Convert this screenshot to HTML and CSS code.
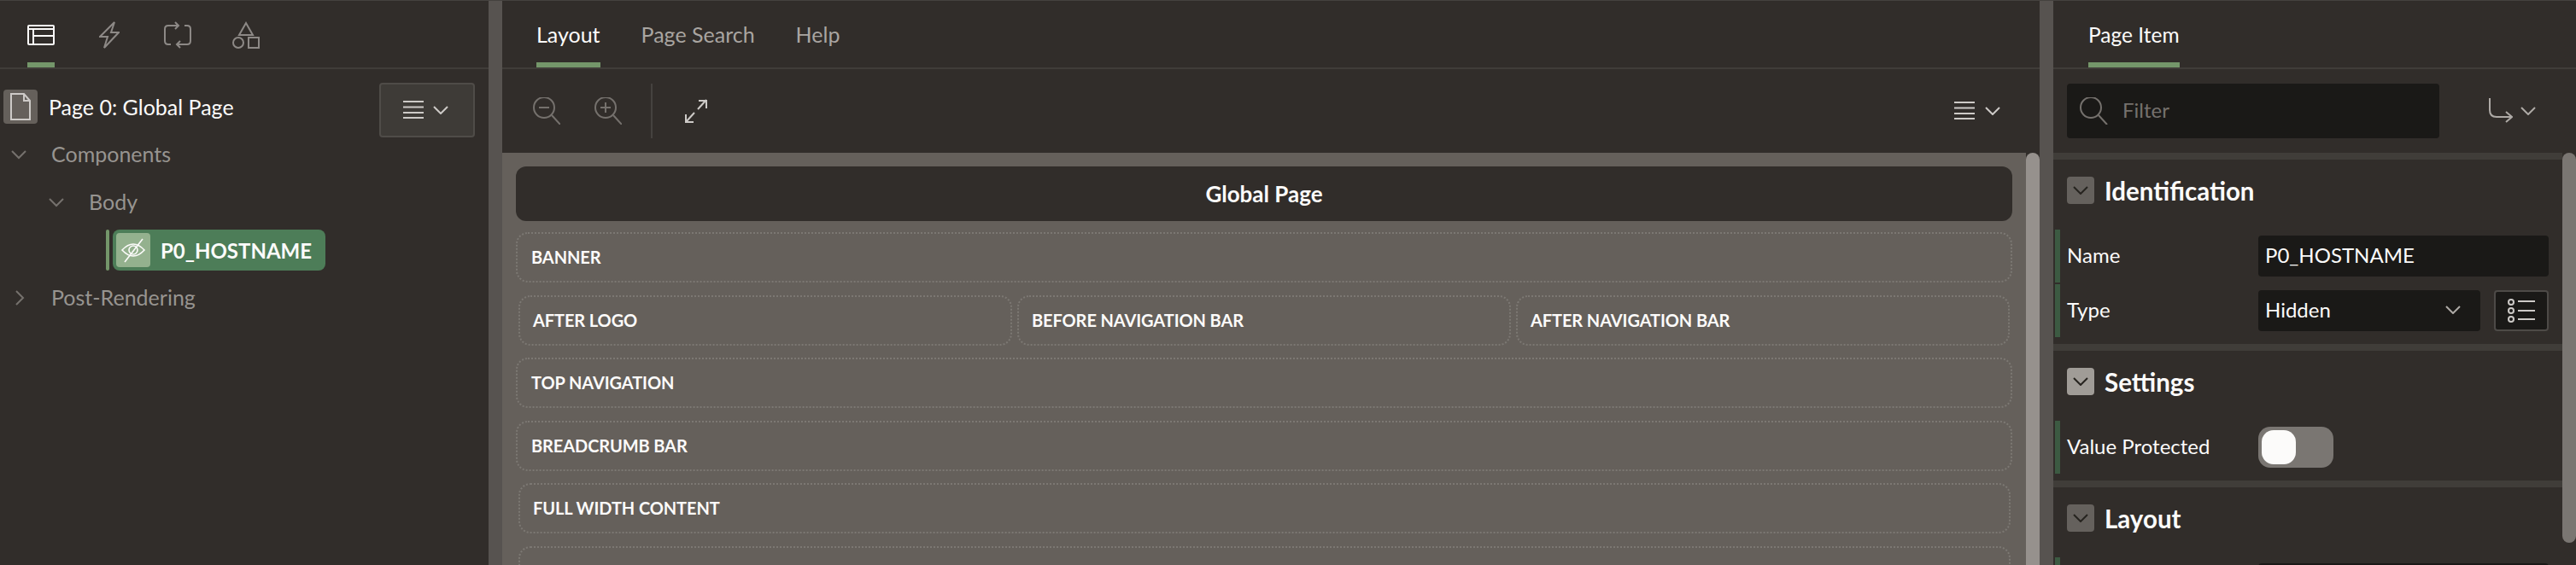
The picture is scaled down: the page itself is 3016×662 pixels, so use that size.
FILE: index.html
```html
<!DOCTYPE html>
<html lang="en">
<head>
  <meta charset="UTF-8">
  <title>Page Designer</title>
  <link rel="stylesheet" href="styles.css">
</head>
<body>

  <div class="designer">

    <!-- left panel: page tree -->
    <div class="panel panel-left">
      <div class="tabs tabs-icons">
        <div class="icon-tab active">
          <svg width="32" height="32" viewBox="0 0 32 32" class="ico ico-white"><rect x="1" y="5" width="30" height="22" rx="1"/><path d="M1 9h30M7 9v18M7 17h24"/></svg>
        </div>
        <div class="icon-tab">
          <svg width="24" height="32" viewBox="0 0 24 32" class="ico"><path d="M18 1 1 18h9L6 31l17-18h-9z"/></svg>
        </div>
        <div class="icon-tab">
          <svg width="32" height="32" viewBox="0 0 32 32" class="ico"><path d="M17 5H5Q1 5 1 9v14q0 4 4 4h3M13 1l4 4-4 4M15 27h12q4 0 4-4V9q0-4-4-4h-3M19 23l-4 4 4 4"/></svg>
        </div>
        <div class="icon-tab">
          <svg width="32" height="32" viewBox="0 0 32 32" class="ico"><path d="M16 2l8 14H8z"/><circle cx="7" cy="25" r="6"/><rect x="19" y="19" width="12" height="12"/></svg>
        </div>
      </div>

      <div class="tree">
        <div class="tree-head">
          <div class="tree-root">
            <span class="page-badge">
              <svg width="26" height="32" viewBox="0 0 26 32" class="ico ico-light"><path d="M2 1h15l7 8v22H2zM17 1v8h7"/></svg>
            </span>
            <span class="tree-root-label">Page 0: Global Page</span>
          </div>
          <div class="menu-btn">
            <svg width="24" height="22" viewBox="0 0 24 22" class="ico ico-light"><path d="M0 1h24M0 7.500h24M0 14h24M0 20h24"/></svg>
            <svg width="18" height="10" viewBox="0 0 18 10" class="ico ico-light"><path d="M1 1l8 8 8-8"/></svg>
          </div>
        </div>

        <div class="tree-row">
          <svg width="18" height="11" viewBox="0 0 18 11" class="ico ico-dim twisty"><path d="M1 1l8 8 8-8"/></svg>
          <span class="tree-label">Components</span>
        </div>
        <div class="tree-row tree-level-2">
          <svg width="18" height="11" viewBox="0 0 18 11" class="ico ico-dim twisty"><path d="M1 1l8 8 8-8"/></svg>
          <span class="tree-label">Body</span>
        </div>
        <div class="tree-node-row">
          <span class="node-mark"></span>
          <div class="node">
            <span class="node-icon">
              <svg width="32" height="32" viewBox="0 0 32 32" class="ico ico-white ico-thin"><path d="M3 16q13-14 26 0q-13 14-26 0z"/><circle cx="16" cy="16" r="5"/><path d="M6 30 27 3"/></svg>
            </span>
            <span class="node-label">P0_HOSTNAME</span>
          </div>
        </div>
        <div class="tree-row tree-closed">
          <svg width="11" height="18" viewBox="0 0 11 18" class="ico ico-dim twisty-side"><path d="M1 1l8 8-8 8"/></svg>
          <span class="tree-label">Post-Rendering</span>
        </div>
      </div>
    </div>

    <div class="splitter"></div>

    <!-- middle panel: layout grid -->
    <div class="panel panel-mid">
      <div class="tabs tabs-text">
        <div class="text-tab active">Layout</div>
        <div class="text-tab">Page Search</div>
        <div class="text-tab">Help</div>
      </div>

      <div class="toolbar">
        <svg width="32" height="32" viewBox="0 0 32 32" class="ico ico-dim"><circle cx="13" cy="12" r="12"/><path d="M22 21l10 11M7 12h12"/></svg>
        <svg width="32" height="32" viewBox="0 0 32 32" class="ico ico-dim tool-plus"><circle cx="13" cy="12" r="12"/><path d="M22 21l10 11M7 12h12M13 6v12"/></svg>
        <span class="tool-divider"></span>
        <svg width="26" height="28" viewBox="0 0 26 28" class="ico ico-light"><path d="M1 27 11 16M15 12 25 1M16 2h9v9M1 18v9h9"/></svg>
        <div class="toolbar-end">
          <svg width="24" height="22" viewBox="0 0 24 22" class="ico ico-light"><path d="M0 1h24M0 7.500h24M0 14h24M0 20h24"/></svg>
          <svg width="18" height="10" viewBox="0 0 18 10" class="ico ico-light"><path d="M1 1l8 8 8-8"/></svg>
        </div>
      </div>

      <div class="canvas-wrap">
        <div class="canvas">
          <div class="canvas-title">Global Page</div>
          <div class="slot">BANNER</div>
          <div class="slot-row">
            <div class="slot">AFTER LOGO</div>
            <div class="slot">BEFORE NAVIGATION BAR</div>
            <div class="slot">AFTER NAVIGATION BAR</div>
          </div>
          <div class="slot">TOP NAVIGATION</div>
          <div class="slot">BREADCRUMB BAR</div>
          <div class="slot slot-inset">FULL WIDTH CONTENT</div>
          <div class="slot slot-inset"></div>
        </div>
        <div class="scrollbar scrollbar-canvas"></div>
      </div>
    </div>

    <div class="splitter"></div>

    <!-- right panel: property editor -->
    <div class="panel panel-right">
      <div class="tabs tabs-text tabs-props">
        <div class="text-tab active">Page Item</div>
      </div>

      <div class="filter-bar">
        <div class="filter">
          <svg width="34" height="32" viewBox="0 0 34 32" class="ico ico-dim"><circle cx="13" cy="12" r="12"/><path d="M22 21l10 11"/></svg>
          <span class="filter-text">Filter</span>
        </div>
        <div class="goto">
          <svg width="28" height="30" viewBox="0 0 28 30" class="ico ico-mid"><path d="M1 0v14q0 8 8 8h18M20 16l7 6-7 6"/></svg>
          <svg width="18" height="10" viewBox="0 0 18 10" class="ico ico-mid"><path d="M1 1l8 8 8-8"/></svg>
        </div>
      </div>

      <div class="props-wrap">
        <div class="props">
          <div class="group">
            <div class="group-head">
              <span class="collapse"><svg width="18" height="10" viewBox="0 0 18 10" class="ico ico-dark"><path d="M1 1l8 8 8-8"/></svg></span>
              <span class="group-title">Identification</span>
            </div>
            <div class="prop">
              <span class="prop-label">Name</span>
              <div class="field field-full">P0_HOSTNAME</div>
            </div>
            <div class="prop">
              <span class="prop-label">Type</span>
              <div class="field field-select">
                Hidden
                <svg width="18" height="10" viewBox="0 0 18 10" class="ico ico-mid"><path d="M1 1l8 8 8-8"/></svg>
              </div>
              <div class="list-btn">
                <svg width="32" height="28" viewBox="0 0 32 28" class="ico ico-light"><circle cx="4" cy="4" r="3"/><circle cx="4" cy="14" r="3"/><circle cx="4" cy="24" r="3"/><path d="M12 3h20M12 14h20M12 24h20"/></svg>
              </div>
            </div>
          </div>

          <div class="group">
            <div class="group-head">
              <span class="collapse collapse-hover"><svg width="18" height="10" viewBox="0 0 18 10" class="ico ico-dark"><path d="M1 1l8 8 8-8"/></svg></span>
              <span class="group-title">Settings</span>
            </div>
            <div class="prop">
              <span class="prop-label">Value Protected</span>
              <div class="switch"><span class="switch-knob"></span></div>
            </div>
          </div>

          <div class="group">
            <div class="group-head">
              <span class="collapse"><svg width="18" height="10" viewBox="0 0 18 10" class="ico ico-dark"><path d="M1 1l8 8 8-8"/></svg></span>
              <span class="group-title">Layout</span>
            </div>
            <div class="prop">
              <span class="prop-label"></span>
              <div class="field field-full"></div>
            </div>
          </div>
        </div>
        <div class="scrollbar scrollbar-props"></div>
      </div>
    </div>

  </div>

</body>
</html>
```

FILE: styles.css
```css
html, body {
  margin: 0;
  height: 100%;
  overflow: hidden;
}
body {
  font-family: Lato, "Noto Sans", sans-serif;
  font-size: 24px;
  color: #fcfbfa;
  background-color: #312d2a;
}
.designer {
  display: flex;
  height: 662px;
  box-sizing: border-box;
  border-top: 1px solid #45423f;
}
.panel {
  display: flex;
  flex-direction: column;
  min-width: 0;
  overflow: hidden;
}
.panel-left {
  width: 572px;
}
.panel-mid {
  width: 1800px;
}
.panel-right {
  width: 612px;
}
.splitter {
  width: 16px;
  background-color: #575350;
}

/* icons */
.ico {
  fill: none;
  stroke: #8d8986;
  stroke-width: 2;
  flex: none;
  display: block;
}
.ico-white {
  stroke: #fcfbfa;
}
.ico-light {
  stroke: #cdcac7;
}
.ico-mid {
  stroke: #aeaaa6;
}
.ico-dim {
  stroke: #75716d;
}
.ico-dark {
  stroke: #26231f;
}
.ico-thin {
  stroke-width: 1.6;
}

/* tabs */
.tabs {
  display: flex;
  height: 78px;
  flex: none;
  border-bottom: 2px solid #403d39;
}
.tabs-icons {
  padding-left: 32px;
  gap: 52px;
}
.icon-tab {
  display: flex;
  height: 72px;
  padding-top: 24px;
  box-sizing: border-box;
}
.icon-tab:nth-child(3) {
  margin-right: -4px;
}
.icon-tab.active,
.text-tab.active {
  border-bottom: 6px solid #74966a;
  height: 78px;
}
.tabs-text {
  padding-left: 40px;
  gap: 48px;
  font-size: 25px;
}
.tabs-props {
  padding-left: 41px;
  font-size: 24.500px;
}
.text-tab {
  height: 78px;
  box-sizing: border-box;
  line-height: 79px;
  color: #a9a5a1;
}
.text-tab.active {
  color: #fcfbfa;
}

/* tree */
.tree {
  padding-top: 16px;
}
.tree-head {
  display: flex;
  justify-content: space-between;
  height: 64px;
  padding: 0 16px 0 4px;
}
.tree-root {
  display: flex;
  align-items: center;
  height: 40px;
  margin-top: 8px;
  font-size: 25px;
}
.page-badge {
  display: flex;
  align-items: center;
  justify-content: center;
  width: 40px;
  height: 40px;
  background-color: #65605b;
  border-radius: 4px;
}
.tree-root-label {
  margin-left: 13px;
  padding-bottom: 1px;
}
.menu-btn {
  display: flex;
  align-items: center;
  justify-content: center;
  gap: 11px;
  width: 112px;
  padding-right: 3px;
  box-sizing: border-box;
  background-color: #3e3b37;
  border: 2px solid #4f4c48;
  border-radius: 4px;
}
.tree-row {
  display: flex;
  align-items: center;
  height: 56px;
  padding-left: 13px;
  margin-top: -8px;
  font-size: 25px;
  color: #979490;
}
.tree-label {
  margin-left: 29px;
  padding-bottom: 2px;
}
.tree-level-2 {
  padding-left: 57px;
  margin-top: 0;
}
.tree-closed {
  padding-left: 18px;
  margin-top: 4px;
}
.tree-closed .tree-label {
  margin-left: 31px;
}
.tree-node-row {
  display: flex;
  padding-left: 124px;
  gap: 4px;
  margin-top: 4px;
}
.node-mark {
  width: 4px;
  height: 48px;
  background-color: #74966a;
  border-radius: 2px;
}
.node {
  display: flex;
  align-items: center;
  height: 48px;
  width: 249px;
  padding-left: 4px;
  box-sizing: border-box;
  background-color: #4d7d58;
  border-radius: 8px;
}
.node-icon {
  display: flex;
  align-items: center;
  justify-content: center;
  width: 40px;
  height: 40px;
  background-color: #94b18e;
  border-radius: 4px;
}
.node-label {
  margin-left: 12px;
  font-weight: 700;
}

/* toolbar */
.toolbar {
  display: flex;
  align-items: center;
  height: 98px;
  flex: none;
  box-sizing: border-box;
  padding: 0 46px 0 36px;
}
.tool-plus {
  margin-left: 40px;
}
.tool-divider {
  width: 2px;
  height: 64px;
  margin: 0 38px 0 34px;
  background-color: #45423f;
}
.toolbar-end {
  display: flex;
  align-items: center;
  gap: 12px;
  margin-left: auto;
}

/* canvas */
.canvas-wrap {
  display: flex;
  flex: 1;
  min-height: 0;
}
.canvas {
  flex: 1;
  min-width: 0;
  padding: 16px;
  background-color: #65605b;
}
.canvas-title {
  height: 64px;
  margin-bottom: 13px;
  line-height: 64px;
  text-align: center;
  font-size: 26px;
  font-weight: 700;
  background-color: #312d2a;
  border-radius: 12px;
}
.slot {
  height: 59px;
  margin-bottom: 14.600px;
  padding-left: 16px;
  box-sizing: border-box;
  line-height: 55px;
  font-size: 20px;
  font-weight: 700;
  letter-spacing: -0.1px;
  border: 2px dotted #7c7873;
  border-radius: 14px;
}
.slot-row {
  display: flex;
  gap: 6px;
  padding: 0 3px;
}
.slot-row .slot {
  flex: 1;
  padding-left: 15px;
}
.slot-inset {
  margin-left: 3px;
  margin-right: 2px;
  padding-left: 15px;
}
.scrollbar {
  width: 16px;
  flex: none;
  border-radius: 8px 8px 0 0;
}
.scrollbar-canvas {
  background-color: #96918d;
}

/* filter */
.filter-bar {
  display: flex;
  align-items: center;
  height: 98px;
  flex: none;
  box-sizing: border-box;
  padding-left: 16px;
}
.filter {
  display: flex;
  align-items: center;
  width: 436px;
  height: 64px;
  padding-left: 15px;
  box-sizing: border-box;
  background-color: #1a1917;
  border-radius: 4px;
}
.filter-text {
  margin-left: 16px;
  padding-bottom: 3px;
  color: #75716d;
}
.goto {
  display: flex;
  align-items: center;
  gap: 9px;
  margin-left: 58px;
}

/* property groups */
.props-wrap {
  display: flex;
  flex: 1;
  min-height: 0;
}
.props {
  flex: 1;
  min-width: 0;
}
.group {
  border-top: 8px solid #403d39;
  padding: 20px 0 6px;
}
.group-head {
  display: flex;
  align-items: center;
  height: 32px;
  padding-left: 16px;
  margin-bottom: 30px;
}
.collapse {
  display: flex;
  align-items: center;
  justify-content: center;
  width: 32px;
  height: 32px;
  background-color: #65615d;
  border-radius: 4px;
}
.collapse-hover {
  background-color: #a09c97;
}
.group-title {
  margin-left: 12px;
  font-size: 29.500px;
  font-weight: 700;
}
.prop {
  display: flex;
  align-items: center;
  height: 62px;
  margin: 0 16px 2px 2px;
  padding-left: 8px;
  border-left: 6px solid #3c5a42;
}
.prop-label {
  width: 224px;
  flex: none;
  padding-bottom: 3px;
}
.field {
  display: flex;
  align-items: center;
  height: 48px;
  box-sizing: border-box;
  padding: 0 8px 3px;
  background-color: #1a1917;
  border-radius: 4px;
}
.field-full {
  flex: 1;
}
.field-select {
  width: 260px;
  justify-content: space-between;
  padding-right: 23px;
}
.list-btn {
  display: flex;
  align-items: center;
  justify-content: center;
  width: 64px;
  height: 48px;
  margin-left: 16px;
  box-sizing: border-box;
  background-color: #1a1917;
  border: 2px solid #4d4a47;
  border-radius: 4px;
}
.switch {
  display: flex;
  align-items: center;
  width: 88px;
  height: 48px;
  padding-left: 4px;
  box-sizing: border-box;
  background-color: #7a7672;
  border-radius: 14px;
}
.switch-knob {
  width: 40px;
  height: 40px;
  background-color: #fcfbfa;
  border-radius: 14px;
}
.scrollbar-props {
  height: 457px;
  background-color: #7a7672;
  border-radius: 8px;
}
```
